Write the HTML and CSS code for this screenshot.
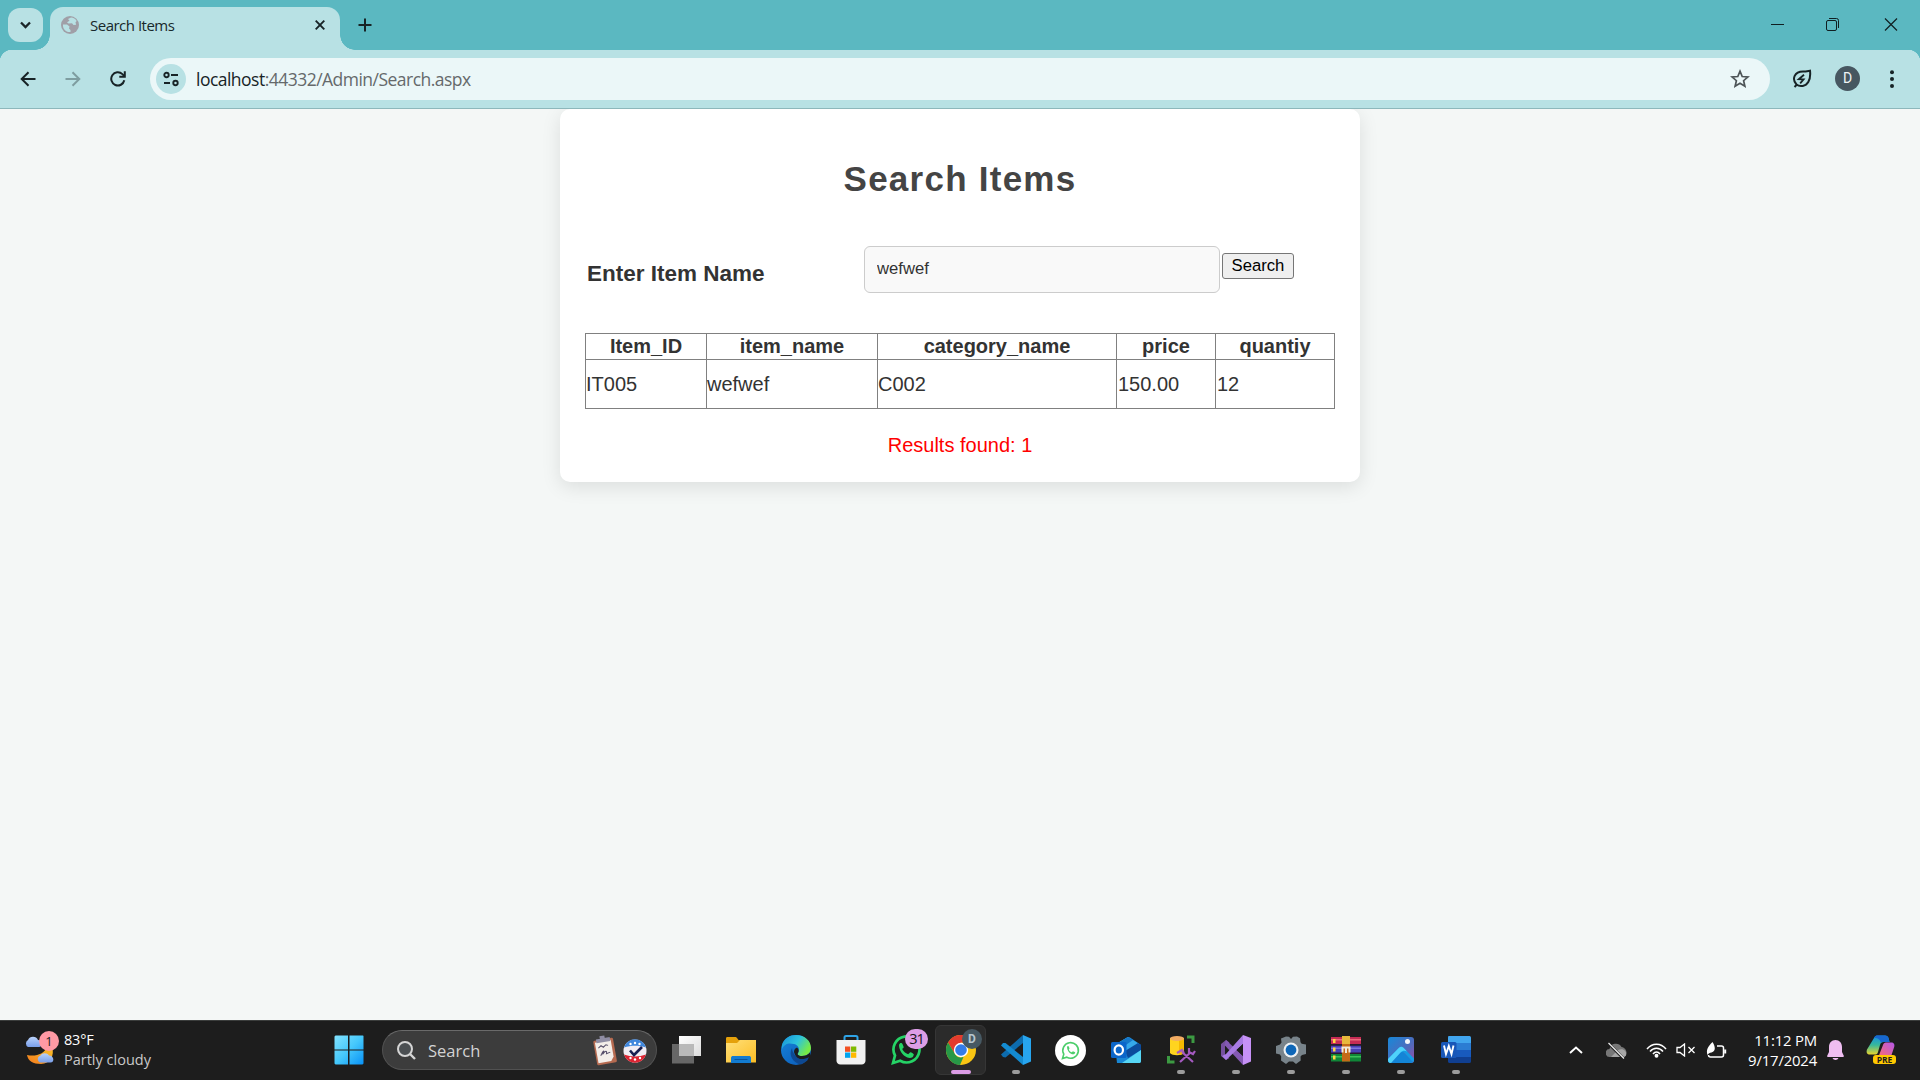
FILE: index.html
```html
<!DOCTYPE html>
<html lang="en">
<head>
<meta charset="utf-8">
<title>Search Items</title>
<link rel="stylesheet" href="styles.css">
</head>
<body>
<div class="screen">
  <header class="tabstrip">
    <button class="tab-search"><svg width="35" height="34" viewBox="0 0 35 34"><path d="M13 14.500l4.500 4.500 4.500-4.500" fill="none" stroke="#1b2528" stroke-width="2.300"/></svg></button>
    <div class="tab">
      <svg width="18" height="18" viewBox="0 0 18 18"><circle cx="9" cy="9" r="9" fill="#a09fa7"/><path d="M2 8.500h4l2.500 2-.5 2 1.500 1.500v2C5 16.500 1.500 13 2 8.500zM7 3l3-1.500c2.500 0 4.500 1.200 5.700 3.500l-1.200 1.200.6 2.600-2.600.2-1.500-1.700-3.500.2-1.500-1.200 2.500-1.500z" fill="#b8e1e4"/></svg>
      <span class="tab-title">Search Items</span>
      <svg class="tab-close" width="10" height="10" viewBox="0 0 10 10"><path d="M.7.700l8.600 8.600M9.300.700L.7 9.300" stroke="#172326" stroke-width="1.900"/></svg>
    </div>
    <svg class="new-tab" width="14" height="14" viewBox="0 0 14 14"><path d="M7 .5v13M.5 7h13" stroke="#172326" stroke-width="2"/></svg>
    <div class="window-controls">
      <svg width="57" height="50" viewBox="0 0 57 50"><path d="M23 24.500h13" stroke="#101f22" stroke-width="1"/></svg>
      <svg width="57" height="50" viewBox="0 0 57 50" fill="none" stroke="#101f22"><rect x="21.500" y="20.500" width="10" height="10" rx="1.500"/><path d="M24 18.500h7.500a2 2 0 0 1 2 2V28"/></svg>
      <svg width="58" height="50" viewBox="0 0 58 50"><path d="M23 18.500l12 12M35 18.500l-12 12" stroke="#101f22" stroke-width="1.200"/></svg>
    </div>
  </header>
  <div class="toolbar">
    <div class="nav">
      <svg width="16" height="16" viewBox="0 0 16 16" fill="none" stroke="#172326" stroke-width="2"><path d="M8.500 1.200L1.700 8l6.800 6.800M1.700 8H15.500"/></svg>
      <svg width="16" height="16" viewBox="0 0 16 16" fill="none" stroke="#7e9da0" stroke-width="2"><path d="M7.500 1.200L14.300 8l-6.800 6.800M14.300 8H.5"/></svg>
      <svg width="18" height="16" viewBox="1 0 18 16" fill="none" stroke="#172326" stroke-width="2"><path d="M15.300 9.300A6.600 6.600 0 1 1 13.400 3.100L15.500 5.200"/><path d="M10.300 5.700h5.500V.2"/></svg>
    </div>
    <div class="omnibox">
      <span class="site-info"><svg width="16" height="16" viewBox="0 0 16 16" fill="none" stroke="#172326" stroke-width="1.900"><circle cx="3.500" cy="4" r="2.200"/><path d="M8 4h7M1 12h6"/><circle cx="12.500" cy="12" r="2.200"/></svg></span>
      <span class="url"><span class="host">localhost</span>:44332/Admin/Search.aspx</span>
      <svg class="star" width="20" height="20" viewBox="0 0 20 20"><path d="M10 2.200l2.200 5.300 5.700.5-4.300 3.700 1.300 5.600-4.900-3-4.900 3 1.300-5.600L2.100 8l5.700-.5z" fill="none" stroke="#4d5457" stroke-width="1.700"/></svg>
    </div>
    <svg class="saver" width="20" height="20" viewBox="0 0 20 20" fill="none" stroke="#172326" stroke-width="2"><path d="M2.500 18l3-3M4.500 15.500C-.5 10 2.500 2.500 11 2.500c3 0 5-.5 7-.8.5 4 .2 8-1.700 11.300-2.500 4.300-8.300 5.300-11.800 2.500z"/><path d="M12 5.800L6.800 10.200l4.800.2-3.400 4" stroke-width="1.800"/></svg>
    <span class="avatar">D</span>
    <svg class="menu" width="6" height="20" viewBox="0 0 6 20" fill="#172326"><circle cx="3" cy="3.200" r="2"/><circle cx="3" cy="10.100" r="2"/><circle cx="3" cy="17" r="2"/></svg>
  </div>

  <main class="page">
    <section class="card">
      <h1>Search Items</h1>
      <div class="form-row">
        <label for="name">Enter Item Name</label>
        <input id="name" type="text" value="wefwef">
        <button class="submit">Search</button>
      </div>
      <table class="results">
        <colgroup><col class="c-id"><col class="c-name"><col class="c-cat"><col class="c-price"><col class="c-qty"></colgroup>
        <tr><th>Item_ID</th><th>item_name</th><th>category_name</th><th>price</th><th>quantiy</th></tr>
        <tr><td class="tight">IT005</td><td class="tight">wefwef</td><td class="tight">C002</td><td>150.00</td><td>12</td></tr>
      </table>
      <p class="message">Results found: 1</p>
    </section>
  </main>

  <footer class="taskbar">
    <div class="weather">
      <div class="weather-icon">
        <svg width="32" height="32" viewBox="0 0 32 32">
          <defs><linearGradient id="cloud" x1="0" y1="0" x2="0" y2="1"><stop offset="0" stop-color="#b9d2fa"/><stop offset="1" stop-color="#799ee9"/></linearGradient><linearGradient id="moon" x1="0" y1="1" x2="1" y2="0"><stop offset="0" stop-color="#f37a1d"/><stop offset="1" stop-color="#f9c32a"/></linearGradient></defs>
          <path d="M3 21c9 2 17-1 20-8 2-1 4-1 5 0 3 8-2 17-11 17C9 30 4 27 3 21z" fill="url(#moon)"/>
          <path d="M4 13a4 4 0 0 1 0-7 5.500 5.500 0 0 1 10 0c4 0 5 7 1 7z" fill="url(#cloud)"/>
          <path d="M16 28.500a3.700 3.700 0 0 1 .5-7 5 5 0 0 1 8.500 0c5 0 6 7 1.500 7z" fill="url(#cloud)"/>
        </svg>
        <span class="alert">1</span>
      </div>
      <div class="weather-text"><span class="temp">83°F</span><span class="sky">Partly cloudy</span></div>
    </div>
    <div class="apps">
      <span class="slot start"><svg width="30" height="30" viewBox="0 0 30 30"><defs><linearGradient id="win" gradientUnits="userSpaceOnUse" x1="0" y1="0" x2="30" y2="30"><stop offset="0" stop-color="#85e4ff"/><stop offset=".5" stop-color="#45c8fb"/><stop offset="1" stop-color="#068ff6"/></linearGradient></defs><path d="M1.500.500H14v14H.5v-13zM15.500.500H29l.5.5v13.500h-14zM.5 15.500H14v14H1.500l-1-1zM15.500 15.500h14v13l-1 1h-13z" fill="url(#win)"/></svg></span>
      <div class="search">
        <svg width="19" height="19" viewBox="0 0 19 19" fill="none" stroke="#d5d5d5"><circle cx="8" cy="8" r="7" stroke-width="2" fill="#4b4f52"/><path d="M13 13l5 5" stroke-width="2.400"/></svg>
        <span class="search-text">Search</span>
        <svg class="highlight" width="56" height="32" viewBox="0 0 56 32">
          <g transform="rotate(-10 13 17)"><rect x="3" y="5" width="20" height="25" rx="1.500" fill="#b56a50"/><path d="M4.500 7h16v17l-3 4h-13z" fill="#f3eee9"/><path d="M6 4h14v4H6zM10 1.500h5V5h-5z" fill="#8f8da3"/><path d="M7 13l3-2 2 2 3-2 2 1M8 21c4-6 5-5 2-1 4-4 5-3 4 0l4-1" fill="none" stroke="#544c68" stroke-width="1"/></g>
          <circle cx="43" cy="17" r="11.500" fill="#f1edf3"/><path d="M32 13.500a11.500 11.500 0 0 1 22 0c-7-2.500-15-2.500-22 0z" fill="#3f87dd"/><path d="M32 20.500a11.500 11.500 0 0 0 22 0c-7 2.500-15 2.500-22 0z" fill="#dc2533"/><g fill="#fff"><circle cx="38.500" cy="10" r="1.200"/><circle cx="43" cy="9" r="1.200"/><circle cx="47.500" cy="10" r="1.200"/><circle cx="38.500" cy="24" r="1.200"/><circle cx="43" cy="25.500" r="1.200"/><circle cx="48" cy="24" r="1.200"/></g><path d="M38 16.500l4 4.500 8-8" fill="none" stroke="#171f52" stroke-width="2.600"/>
        </svg>
      </div>
      <span class="slot first"><svg width="30" height="30" viewBox="0 0 30 30"><defs><linearGradient id="tv" x1="0" y1="0" x2="1" y2="1"><stop offset="0" stop-color="#fff"/><stop offset="1" stop-color="#dcdcdc"/></linearGradient></defs><rect x="8" y="1" width="22" height="20" fill="url(#tv)"/><rect x="1" y="9" width="22" height="19.500" fill="#777" opacity=".82"/><path d="M8 9h15v12H8z" fill="#b9b9b9"/></svg></span>
      <span class="slot"><svg width="30" height="30" viewBox="0 0 30 30"><defs><linearGradient id="fold" x1="0" y1="0" x2="1" y2="1"><stop offset="0" stop-color="#ffe07a"/><stop offset="1" stop-color="#fbbd24"/></linearGradient></defs><path d="M0 3.500C0 2.500.5 2 1.500 2H9c1 0 1.500.3 2 1l1.500 2H28v10H0z" fill="#e5a10b"/><path d="M0 8h11l3-3h16v22.500H0z" fill="url(#fold)"/><path d="M5 28v-5c0-1.500 1-2 2-2h16c1 0 2 .5 2 2v5z" fill="#127bd0"/><path d="M8.500 24.500h13" stroke="#08549c"/></svg></span>
      <span class="slot"><svg width="30" height="30" viewBox="0 0 30 30"><defs><linearGradient id="ea" x1="0" y1="0" x2="1" y2=".5"><stop offset="0" stop-color="#178fd9"/><stop offset=".55" stop-color="#2dc3dd"/><stop offset="1" stop-color="#77eb46"/></linearGradient><linearGradient id="eb" x1="0" y1="0" x2="1" y2="1"><stop offset="0" stop-color="#1684da"/><stop offset="1" stop-color="#0b58b5"/></linearGradient></defs><circle cx="15" cy="15" r="15" fill="url(#eb)"/><path d="M1 10C3 3 9 0 15 0c9 0 15 6 15 13 0 5-4 8-9 8-4 0-5-2-4-3 2-3 1-8-4-9S4 8 1 14z" fill="url(#ea)"/><path d="M11 13c-4 7 1 15 9 16.500 4-1.500 7-5 8-8-8 4-16 1-17-8.500z" fill="#0e4992"/><path d="M17 18c-1 1 0 3 4 3 3 0 6-1 8-3.500V24c-4 2-14 2-16-7 0-2 1-4 3-4.500 2 1.500 2 4 1 5.500z" fill="#1d1d1d"/><path d="M12 17c1 7 9 9 16 5l-2 4c-8 3-15-2-14-9z" fill="#0e4992"/></svg></span>
      <span class="slot"><svg width="30" height="30" viewBox="0 0 30 30"><path d="M8.500 5V2.500c0-1 .5-1.500 1.500-1.500h10c1 0 1.500.5 1.500 1.500V5" fill="none" stroke="#2ea4e7" stroke-width="2"/><path d="M.5 5h29v20a4 4 0 0 1-4 4.500h-21a4 4 0 0 1-4-4.500z" fill="#f1f1f1"/><path d="M9 11.500h5.300v5.300H9z" fill="#f25022"/><path d="M15 11.500h5.300v5.300H15z" fill="#7fba00"/><path d="M9 17.500h5.300v5.300H9z" fill="#00a4ef"/><path d="M15 17.500h5.300v5.300H15z" fill="#ffb900"/></svg></span>
      <span class="slot"><svg width="30" height="30" viewBox="0 0 30 30"><path d="M2 28l2-7.500a13 13 0 1 1 5.200 5.300z" fill="none" stroke="#25d366" stroke-width="2.700"/><path d="M8 10c1-3 3-2 3.500-1l1.200 3c0 1-1 1.500-1.500 2 1.500 3 4 4.500 6 5.200l2-2c1.500.3 3 1.300 3.600 2-.2 4-4 4.300-6.500 3.300C11.500 20.500 8 15 8 10z" fill="#25d366"/></svg><span class="badge">31</span></span>
      <span class="slot active"><svg width="30" height="30" viewBox="0 0 30 30"><circle cx="15" cy="15" r="15" fill="#f9c513"/><path d="M2 7.500A15 15 0 0 1 28 7.500H15L9 19z" fill="#e33b2e"/><path d="M2 7.500L9 19c2 3.500 5 4 8.500 3L14 30A15 15 0 0 1 2 7.500z" fill="#279847"/><circle cx="15" cy="15" r="7.200" fill="#fff"/><circle cx="15" cy="15" r="5.800" fill="#337ce8"/></svg><span class="profile">D</span><i class="bar"></i></span>
      <span class="slot"><svg width="30" height="30" viewBox="0 0 30 30"><path d="M22 0v8L4.500 22.500 2 22 0 19.500z" fill="#0d6cae"/><path d="M0 10.500L2 8h2.500L22 22v8z" fill="#148bd0"/><path d="M22 0l8 3.500v23L22 30z" fill="#27a5ef"/></svg><i class="dot"></i></span>
      <span class="slot"><svg width="31" height="31" viewBox="0 0 31 31"><circle cx="15.500" cy="15.500" r="15.500" fill="#fff"/><path d="M7.500 23.500l1.300-4.300a7.800 7.800 0 1 1 3 3z" fill="none" stroke="#4cce6b" stroke-width="1.600"/><path d="M12 12c.5-1.500 1.700-1 2 0l.5 1.500-.7 1.200c.8 1.500 1.800 2.200 3 2.600l1.100-1.100 2.300 1c0 2-2 2.500-3.700 1.900C14 18 12 15 12 12z" fill="#4cce6b"/></svg></span>
      <span class="slot"><svg width="30" height="30" viewBox="0 0 30 30"><path d="M4 10L16 2.500c1-.5 2-.5 3 0L30 10v16c0 1.500-1 2-2 2H6z" fill="#1987d4"/><path d="M5 9l12-7 11 7-12 7z" fill="#35a8ea"/><path d="M5 9l12-7 5 3-10 7z" fill="#1577c8"/><path d="M14 16L27 8l3 2v5l-13 8z" fill="#0b4b9c"/><path d="M11 28l19-13v11c0 1.500-1 2-2 2z" fill="#57d6f5"/><rect y="7" width="15.500" height="16" rx="1.500" fill="#0b66ca"/><ellipse cx="7.800" cy="15" rx="4.200" ry="4.600" fill="none" stroke="#fff" stroke-width="2.200"/></svg></span>
      <span class="slot"><svg width="30" height="30" viewBox="0 0 30 30"><path d="M4 3v15c2 3 12 3 14 0V3z" fill="#ffd41f"/><path d="M13 3h5v15l-5 2z" fill="#f6b900"/><ellipse cx="11" cy="3.500" rx="7" ry="2.500" fill="#f2ac63"/><path d="M21 2h6v6M2.500 21v6h6" fill="none" stroke="#3c9a42" stroke-width="3"/><path d="M14 27l11-10M16 17l11 10M11 18l5-3 2 3M23 13v4l4 2 2-3" stroke="#a45ac0" stroke-width="2.200" fill="none"/></svg><i class="dot"></i></span>
      <span class="slot"><svg width="30" height="30" viewBox="0 0 30 30"><path d="M0 9l5-4 3.500 2.500L4 11v9l4.500 3L5 25l-5-4z" fill="#76509f"/><path d="M5 5L22 21v9L3.500 10z" fill="#8459b4"/><path d="M22 0v9L5 25l-4-4 4-2z" fill="#a87be3"/><path d="M22 0l8 3v23.500L22 30z" fill="#c691f6"/><path d="M22 9v12l-6.500-6z" fill="#1d1d1d"/></svg><i class="dot"></i></span>
      <span class="slot"><svg width="30" height="30" viewBox="0 0 30 30"><path d="M10 1.500l3 .2L15 4l2-2.300 4-.2 3 1.800.5 4 1.200 1.500 4.300.7v9.500l-4 1-1.500 1.500.2 4L20 29l-3-2.500h-4L10 29l-5-3.500.2-4L4 19.500 0 18.500V11l4-1.500L5.500 7.500 5 3.500z" fill="#78838a"/><circle cx="15" cy="15" r="7.500" fill="#eef1f3"/><circle cx="15" cy="15" r="5.400" fill="#0e67b8"/></svg><i class="dot"></i></span>
      <span class="slot"><svg width="30" height="30" viewBox="0 0 30 30"><path d="M0 2h30v8H0z" fill="#c62c55"/><path d="M0 4h30v1.500H0z" fill="#ed6c7c"/><path d="M0 10.500h30v8H0z" fill="#4940b7"/><path d="M0 12.500h30V14H0z" fill="#7c75df"/><path d="M0 19h30v7.500H0z" fill="#108638"/><path d="M0 21h30v1.500H0z" fill="#3bc159"/><path d="M0 9h30v1.500H0zM0 17.500h30V19H0z" fill="#2a1a30"/><path d="M2 4h2.500v4H2zM2 12.500h2.500v4H2zM2 20.500h2.500v4H2z" fill="#ffd743"/><path d="M11 1h8v25.500h-8z" fill="#c56a17"/><path d="M11 1h8v8h-8z" fill="#e8b83c"/><path d="M11.500 17.500v-5h7v5M15 13v5" fill="none" stroke="#f2e9d8" stroke-width="2"/></svg><i class="dot"></i></span>
      <span class="slot"><svg width="30" height="30" viewBox="0 0 30 30"><defs><linearGradient id="ph" x1="0" y1="0" x2="1" y2="1"><stop offset="0" stop-color="#1689d9"/><stop offset=".6" stop-color="#5269bb"/><stop offset="1" stop-color="#9d4aa5"/></linearGradient></defs><rect x="2" y="2" width="26" height="26" rx="3" fill="url(#ph)"/><path d="M5 28L16 16l11.500 11c-.7.700-1.500 1-2.500 1z" fill="#1385d7"/><path d="M2 24l11-11.200c1.500-1.300 3-1.300 4.500 0L28 23.500V25c0 1-.3 1.700-.8 2.200L18.500 18c-1.500-1.500-3-1.500-4.500 0L5 28c-2 0-3-1-3-3z" fill="#159ce4"/><path d="M2 24l11-11.200c1.500-1.300 3-1.300 4.500 0l3.500 3.700c-2.500-1.500-4.500-1-6.500 1L5 28c-2 0-3-1-3-3z" fill="#4fd2fb"/><circle cx="21.500" cy="6.500" r="2.500" fill="#f4f6fa"/></svg><i class="dot"></i></span>
      <span class="slot"><svg width="30" height="30" viewBox="0 0 30 30"><path d="M8 1h20c1 0 2 .5 2 1.500V8H7V2.500C7 1.500 7.300 1 8 1z" fill="#41a5ee"/><path d="M7 8h23v7H7z" fill="#2b7cd3"/><path d="M7 15h23v7H7z" fill="#185abd"/><path d="M7 22h23v4.500c0 1-1 1.500-2 1.500H9c-1 0-2-.5-2-1.500z" fill="#103f91"/><rect y="7" width="15.500" height="16" rx="1.500" fill="#1857b8"/><path d="M3 10.500l2 8.500L7.800 11l2.700 8 2-8.500" fill="none" stroke="#fff" stroke-width="1.900"/></svg><i class="dot"></i></span>
    </div>
    <div class="tray">
      <svg class="chevron" width="14" height="8" viewBox="0 0 14 8"><path d="M1 7l6-5.500L13 7" fill="none" stroke="#fff" stroke-width="1.900"/></svg>
      <svg class="onedrive" width="21" height="17" viewBox="0 0 21 17"><path d="M4 15a4 4 0 0 1-.5-8A6.500 6.500 0 0 1 15.500 5C22 6 22 15 17 15z" fill="#777"/><path d="M5 15l7-7c5-2 9 1 8 5-.5 1.500-1.500 2-3 2z" fill="#a6a6a6"/><path d="M2.500 1.500L17 16" stroke="#1d1d1d" stroke-width="2.600"/><path d="M2.500 1L18 16.500" stroke="#eee" stroke-width="1.300"/></svg>
      <svg class="wifi" width="21" height="15" viewBox="0 0 21 15" fill="none" stroke="#fff" stroke-width="1.500"><path d="M1 6C6-.500 15-.500 20 6M4 8.500c3.500-4.500 9.500-4.500 13 0M7 11c2-2.700 5-2.700 7 0"/><circle cx="10.500" cy="12.700" r="1.200" fill="#fff"/></svg>
      <svg class="volume" width="20" height="14" viewBox="0 0 20 14" fill="none" stroke="#fff" stroke-width="1.300"><path d="M1 4.500h3L8.500 1v12L4 9.500H1z"/><path d="M12.500 4l6 6M18.500 4l-6 6"/></svg>
      <svg class="battery" width="21" height="17" viewBox="0 0 21 17" fill="none" stroke="#fff" stroke-width="1.500"><path d="M11 4h4.500c1.500 0 2 .7 2 2v7c0 1.300-.7 2-2 2h-11c-1.500 0-2-.7-2-2"/><path d="M19.200 7.500v4" stroke-width="2"/><path d="M1.500 13c-1.500-5 0-8 5-13 2.500 4 4 9-1 10.500-2 .3-3 .8-4 2.500z" fill="#fff" stroke="none"/></svg>
      <div class="clock"><span>11:12 PM</span><span>9/17/2024</span></div>
      <svg class="bell" width="17" height="20" viewBox="0 0 17 20"><path d="M8.500 0C4.500 0 2 3 2 7v5L.2 15.700c-.3.800 0 1.300.8 1.300h15c.8 0 1-.5.8-1.300L15 12V7c0-4-2.500-7-6.500-7zM5.500 18h6c-1 2.500-5 2.500-6 0z" fill="#efbdf1"/></svg>
      <div class="copilot"><svg width="30" height="30" viewBox="0 0 30 30"><defs><linearGradient id="ca" x1="0" y1="0" x2="0" y2="1"><stop offset="0" stop-color="#128ee8"/><stop offset=".5" stop-color="#37b99b"/><stop offset="1" stop-color="#e9d42d"/></linearGradient><linearGradient id="cb" x1="1" y1="0" x2="0" y2="1"><stop offset="0" stop-color="#b458ea"/><stop offset="1" stop-color="#fa6b72"/></linearGradient></defs><path d="M8 3c1-2 2-2.500 4-2.500h7c2 0 3 1 3.500 2.500l1 4h-6c-2 0-3 1-3.500 3l-2 7c-.5 2-1.500 2.500-3 2.500H4c-3 0-4-2-3-5z" fill="url(#ca)"/><path d="M8 3c1-2 2-2.500 4-2.500h7c2 0 3 1 3.500 2.500l1 4h-6c-1 0-2 0-2.500 1-1-3-2-5-7-5z" fill="#1767cf"/><path d="M17 10c.5-2 2-2.500 4-2.500h4c3 0 4 2 3 5l-3 9H12.500z" fill="url(#cb)"/></svg><span class="pre">PRE</span></div>
    </div>
  </footer>
</div>
</body>
</html>
```
FILE: styles.css
```css
* { box-sizing: border-box; }
body { margin: 0; font-family: "Liberation Sans", Arial, sans-serif; }
svg { display: block; flex: none; }
.screen { width: 1920px; height: 1080px; display: flex; flex-direction: column; overflow: hidden; background: #f4f7f6; }

.tabstrip { height: 50px; flex: none; display: flex; align-items: flex-start; background: #5bb8c1; font-family: "Open Sans", "Noto Sans", sans-serif; }
.tab-search { width: 35px; height: 34px; margin: 8px 0 0 8px; padding: 0; border: 0; border-radius: 12px; background: #b8e1e4; }
.tab { position: relative; width: 290px; height: 43px; margin: 7px 0 0 7px; padding: 0 15px 7px 11px; display: flex; align-items: center; border-radius: 13px 13px 0 0; background: #b8e1e4; }
.tab::before, .tab::after { content: ""; position: absolute; bottom: 0; width: 15px; height: 15px; }
.tab::before { left: -15px; background: radial-gradient(circle at 0 0, transparent 14.5px, #b8e1e4 15px); }
.tab::after { right: -15px; background: radial-gradient(circle at 100% 0, transparent 14.5px, #b8e1e4 15px); }
.tab-title { margin-left: 11px; font-size: 15px; line-height: 20px; letter-spacing: -.5px; color: #17282b; white-space: nowrap; }
.tab-close { margin-left: auto; }
.new-tab { margin: 18px 0 0 18px; }
.window-controls { margin-left: auto; display: flex; }

.toolbar { height: 59px; flex: none; display: flex; align-items: center; padding: 0 25px 1px 20px; border-bottom: 1px solid #8db7bb; background: radial-gradient(circle at 12px 12px, #b8e1e4 12px, #5bb8c1 12.500px) 0 0 / 12px 12px no-repeat, radial-gradient(circle at 0 12px, #b8e1e4 12px, #5bb8c1 12.500px) 100% 0 / 12px 12px no-repeat, linear-gradient(#b8e1e4, #b8e1e4) 12px 0 / 1896px 12px no-repeat, linear-gradient(#b8e1e4, #b8e1e4) 0 12px no-repeat; }
.nav { width: 130px; display: flex; gap: 29px; }
.omnibox { width: 1620px; height: 42px; padding: 0 20px 0 6px; display: flex; align-items: center; border-radius: 21px; background: #ebf7f8; }
.site-info { width: 30px; height: 30px; display: grid; place-items: center; border-radius: 50%; background: #b8e1e4; }
.url { margin-left: 10px; font: 17.500px/24px "Open Sans", "Noto Sans", sans-serif; letter-spacing: -.52px; color: #65696b; }
.host { color: #182426; }
.star { margin-left: auto; }
.saver { margin-left: 22px; }
.avatar { width: 25px; height: 25px; margin-left: 23px; border-radius: 50%; background: #475761; color: #eef3f5; text-align: center; font: 14px/25px Roboto, sans-serif; }
.menu { margin-left: auto; }

.page { flex: 1; min-height: 0; overflow: hidden; display: flex; justify-content: center; align-items: flex-start; color: #333; }
.card { width: 800px; height: 373px; padding: 0 25px; border-radius: 10px; background: #fff; box-shadow: 0 5px 19px rgba(0, 0, 0, .1); }
h1 { margin: 50px 0 0; font-size: 35px; line-height: 40px; letter-spacing: 1.25px; text-align: center; color: #444; }
.form-row { display: flex; align-items: flex-start; height: 47px; margin-top: 47px; padding-left: 2px; }
.form-row label { width: 277px; padding-top: 15px; font-size: 22.500px; line-height: 26px; font-weight: bold; }
.form-row input { width: 356px; height: 47px; padding: 0 12px 1px; border: 1px solid #ccc; border-radius: 6px; background: #f9f9f9; font: 16.670px "Liberation Sans", Arial, sans-serif; color: #333; }
.submit { width: 72px; height: 26px; margin: 7px 0 0 2px; padding: 0; border: 1px solid #767676; border-radius: 3px; background: #efefef; color: #000; font: 16.670px/22px "Liberation Sans", Arial, sans-serif; }
.results { width: 750px; margin-top: 40px; table-layout: fixed; border-collapse: collapse; font-size: 20px; line-height: 23px; }
.results th, .results td { padding: 0; border: 1px solid #808080; }
.results th { height: 26px; }
.results td { height: 49px; padding-left: 1px; }
.results .tight { padding-left: 0; }
.c-id { width: 121px; }
.c-name { width: 171px; }
.c-cat { width: 239px; }
.c-price { width: 99px; }
.c-qty { width: 119px; }
.message { margin: 24px 0 0; font-size: 20px; line-height: 24px; text-align: center; color: #f00; }

.taskbar { height: 60px; flex: none; display: flex; align-items: center; padding-bottom: 1px; border-top: 1px solid #3b3d3c; background: #1d1d1d; color: #fff; font-family: "Open Sans", "Noto Sans", sans-serif; }
.weather { width: 321px; padding-left: 24px; display: flex; align-items: center; }
.weather-icon { position: relative; width: 40px; }
.alert { position: absolute; left: 15px; top: -3px; width: 20px; height: 20px; border-radius: 50%; background: #ff99a4; color: #222; text-align: center; font-size: 13px; line-height: 20px; }
.weather-text { display: flex; flex-direction: column; font-size: 14.500px; line-height: 20px; }
.temp { letter-spacing: -.2px; }
.sky { color: #c9c9c9; letter-spacing: 0; }
.apps { display: flex; align-items: center; }
.slot { position: relative; width: 55px; height: 50px; display: grid; place-items: center; }
.search { width: 275px; height: 40px; margin-left: 6px; padding: 0 8px 0 14px; display: flex; align-items: center; border: 1px solid #515151; border-top-color: #6a6a6a; border-radius: 20px; background: #3c3c3c; }
.search-text { margin-left: 12px; font-size: 16.500px; color: #d3d3d3; }
.highlight { margin-left: auto; }
.first { margin-left: 1px; }
.badge { position: absolute; left: 27px; top: 4px; width: 23px; height: 20px; border-radius: 10px; background: #dc9de6; color: #161616; text-align: center; font-size: 14.500px; line-height: 20px; letter-spacing: -1px; }
.active::before { content: ""; position: absolute; inset: 0 2px; border: 1px solid #363636; border-radius: 6px; background: #2b2b2b; }
.active svg { position: relative; }
.profile { position: absolute; left: 29px; top: 4px; width: 20px; height: 20px; border-radius: 50%; background: #475963; color: #b6c6cf; text-align: center; font: bold 12px/20px Roboto, sans-serif; }
.bar, .dot { position: absolute; bottom: 1px; height: 4px; border-radius: 2px; }
.bar { left: 18px; width: 20px; background: #dc9de6; }
.dot { left: 24px; width: 8px; background: #9c9c9c; }
.tray { flex: 1; display: flex; align-items: center; justify-content: flex-end; padding-right: 24px; }
.onedrive { margin-left: 23px; }
.wifi { margin-left: 19px; }
.volume { margin-left: 9px; }
.battery { margin-left: 10px; }
.clock { width: 90px; display: flex; flex-direction: column; text-align: right; font-size: 14.900px; line-height: 20px; letter-spacing: -.18px; }
.bell { margin-left: 10px; }
.copilot { position: relative; margin-left: 22px; width: 30px; }
.pre { position: absolute; left: 7px; top: 20px; width: 23px; height: 9px; border-radius: 3px; background: #ffc800; color: #1c1c1c; text-align: center; font-size: 8.500px; line-height: 9px; font-weight: bold; }
```
